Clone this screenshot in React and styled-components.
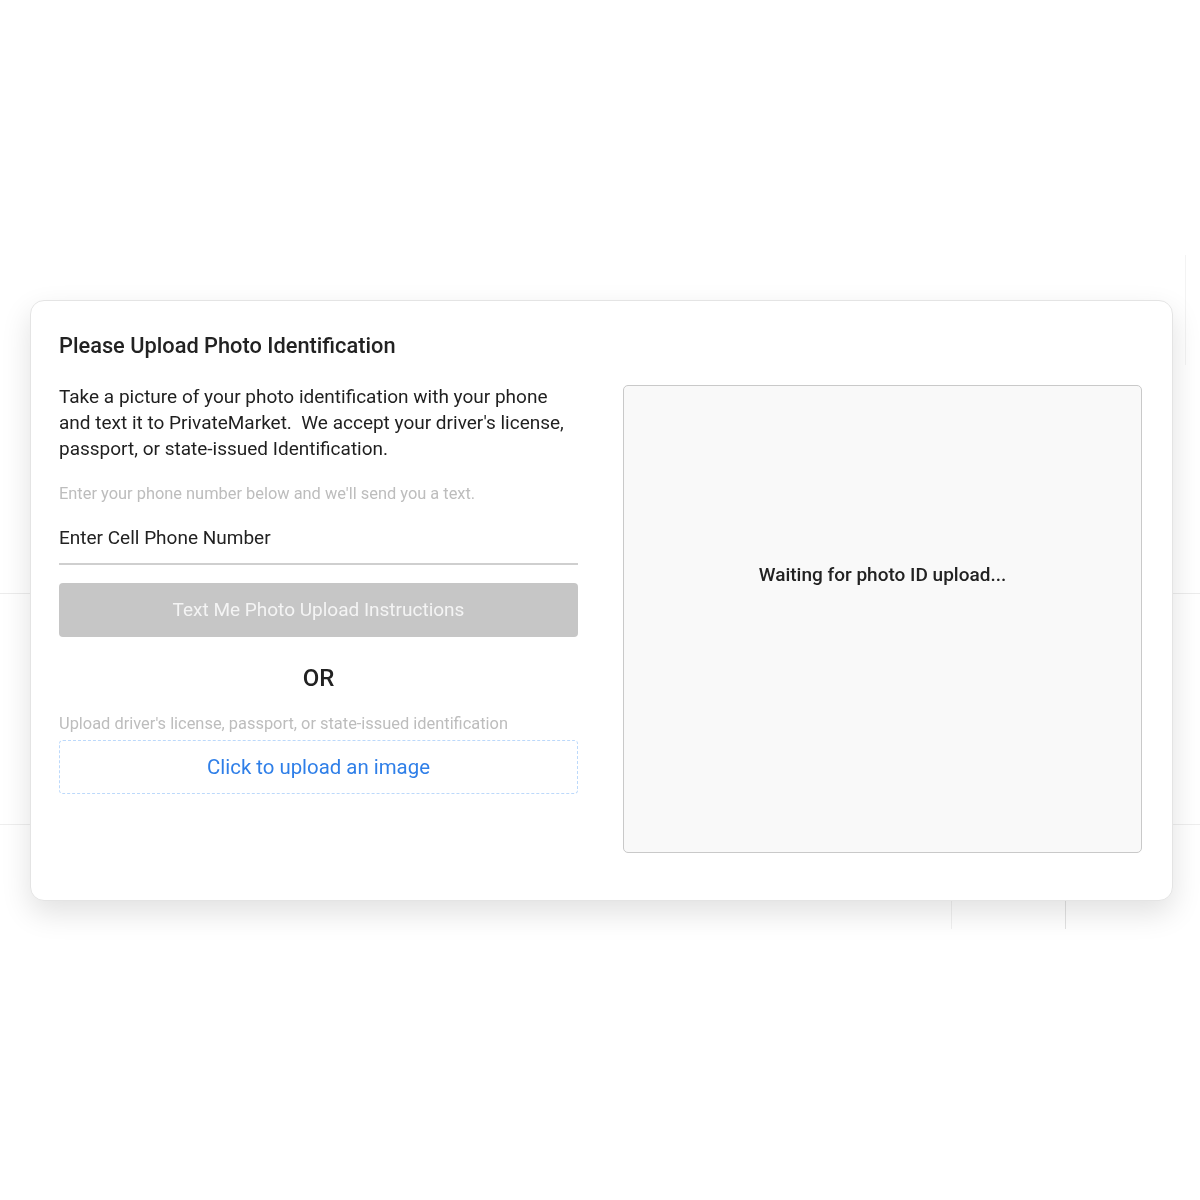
import React from "react";
import styled, { createGlobalStyle } from "styled-components";

const Global = createGlobalStyle`
  html, body { margin: 0; padding: 0; background: #ffffff; }
  body { font-family: Roboto, "Noto Sans", "Liberation Sans", sans-serif; color: #222; }
  * { box-sizing: border-box; }
`;

const BackPage = styled.div`
  height: 1200px;
  padding-top: 255px;
  display: flex;
  flex-direction: column;
`;

const BackHeader = styled.div`
  height: 110px;
  display: flex;
  justify-content: flex-end;
`;

const BackHeaderCell = styled.div`
  width: 15px;
  border-left: 1px solid #f3f3f3;
`;

const BackRow = styled.div`
  height: ${(p) => p.$h}px;
  border-bottom: 1px solid ${(p) => p.$line || "#ececec"};
  display: flex;
`;

const BackCell = styled.div`
  width: ${(p) => p.$w}px;
  border-right: 1px solid ${(p) => p.$line || "transparent"};
`;

const Overlay = styled.div`
  position: fixed;
  inset: 0;
  display: flex;
  align-items: center;
  padding-left: 30px;
`;

const Modal = styled.div`
  width: 1143px;
  background: #fff;
  border: 1px solid #e4e4e4;
  border-radius: 14px;
  box-shadow: 0 12px 30px rgba(0, 0, 0, 0.12);
  padding: 30px 31px 47px 28px;
`;

const Title = styled.h2`
  margin: 0 0 23px 0;
  font-size: 21.8px;
  line-height: 30px;
  font-weight: 500;
  color: #222;
`;

const Columns = styled.div`
  display: grid;
  grid-template-columns: 519px 519px;
  column-gap: 45px;
`;

const Left = styled.div`
  display: flex;
  flex-direction: column;
`;

const Body = styled.p`
  margin: 0;
  font-size: 19px;
  line-height: 26px;
  color: #1f1f1f;
`;

const Hint = styled.p`
  margin: ${(p) => p.$m};
  font-size: 16.4px;
  line-height: 20px;
  color: #bdbdbd;
  white-space: nowrap;
`;

const PhoneField = styled.div`
  font-size: 19px;
  line-height: 26px;
  color: #222;
  padding-bottom: 12px;
  border-bottom: 2px solid #cfcfcf;
  margin-top: 21px;
`;

const SendButton = styled.button`
  margin-top: 18px;
  height: 54px;
  border: none;
  border-radius: 4px;
  background: #c6c6c6;
  color: #f4f4f4;
  font-family: inherit;
  font-size: 19px;
  width: 100%;
`;

const Or = styled.div`
  margin-top: 27px;
  text-align: center;
  font-size: 24px;
  line-height: 28px;
  font-weight: 500;
  color: #222;
`;

const Dropzone = styled.div`
  margin-top: 6px;
  height: 54px;
  border: 1.5px dashed #bcd9fb;
  border-radius: 4px;
  display: flex;
  align-items: center;
  justify-content: center;
  color: #2f7fe8;
  font-size: 20.4px;
`;

const Preview = styled.div`
  margin-top: 1px;
  height: 468px;
  background: #f9f9f9;
  border: 1.5px solid #c9c9c9;
  border-radius: 5px;
  display: flex;
  justify-content: center;
  padding-top: 178px;
  font-size: 19px;
  line-height: 22px;
  font-weight: 500;
  color: #222;
`;

export default function App() {
  return (
    <>
      <Global />
      <BackPage>
        <BackHeader>
          <BackHeaderCell />
        </BackHeader>
        <BackRow $h={229} $line="#ececec" />
        <BackRow $h={231} $line="#eeeeee" />
        <BackRow $h={105} $line="transparent">
          <BackCell $w={952} $line="#f0f0f0" />
          <BackCell $w={114} $line="#e2e2e2" />
        </BackRow>
      </BackPage>
      <Overlay>
        <Modal>
          <Title>Please Upload Photo Identification</Title>
          <Columns>
            <Left>
              <Body>
                Take a picture of your photo identification with your phone and
                text it to PrivateMarket.&nbsp; We accept your driver's license,
                passport, or state-issued Identification.
              </Body>
              <Hint $m="22px 0 0 0">
                Enter your phone number below and we'll send you a text.
              </Hint>
              <PhoneField>Enter Cell Phone Number</PhoneField>
              <SendButton>Text Me Photo Upload Instructions</SendButton>
              <Or>OR</Or>
              <Hint $m="22px 0 0 0">
                Upload driver's license, passport, or state-issued identification
              </Hint>
              <Dropzone>Click to upload an image</Dropzone>
            </Left>
            <Preview>Waiting for photo ID upload...</Preview>
          </Columns>
        </Modal>
      </Overlay>
    </>
  );
}
